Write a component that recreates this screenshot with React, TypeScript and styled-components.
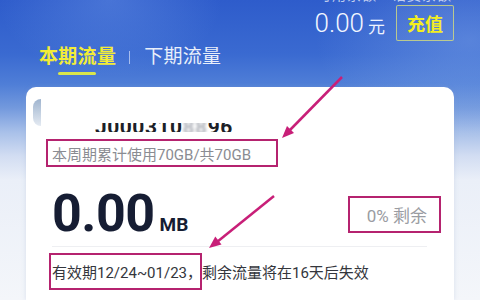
import React from "react";
import styled, { createGlobalStyle } from "styled-components";

const Global = createGlobalStyle`
  html, body { margin: 0; padding: 0; }
  body { width: 480px; height: 300px; overflow: hidden; font-family: Roboto, "Noto Sans CJK SC", sans-serif; }
`;

const Page = styled.div`
  position: relative;
  width: 480px;
  height: 300px;
  overflow: hidden;
  background:
    radial-gradient(ellipse 160px 110px at 110px 0px, rgba(120,160,235,0.35), rgba(120,160,235,0) 70%),
    radial-gradient(ellipse 220px 140px at 470px 40px, rgba(150,185,240,0.35), rgba(150,185,240,0) 70%),
    linear-gradient(180deg, #2e5ccb 0%, #3a6ad1 18%, #4f7ed7 28%, #7399dd 36%, #a8c0e9 44%, #d2ddf2 52%, #eaeff8 60%, #f4f6fa 100%);
  display: flex;
  flex-direction: column;
`;

const Header = styled.div`
  display: flex;
  flex-direction: column;
  align-items: flex-end;
  padding-right: 26px;
`;

const ClipLine = styled.div`
  height: 4px;
  overflow: hidden;
  display: flex;
  align-items: flex-end;
  padding-right: 2px;
`;

const ClipText = styled.span`
  font-size: 14px;
  line-height: 18px;
  color: rgba(255,255,255,0.7);
  white-space: nowrap;
  letter-spacing: 1px;
`;

const BalanceRow = styled.div`
  display: flex;
  align-items: center;
  margin-top: 1px;
`;

const Amount = styled.span`
  font-size: 26px;
  font-weight: 300;
  color: #f2f6ff;
  line-height: 30px;
`;

const Unit = styled.span`
  font-size: 17px;
  color: #eef3ff;
  margin-left: 4px;
  margin-top: 4px;
`;

const RechargeButton = styled.div`
  margin-left: 11px;
  width: 58px;
  height: 36px;
  box-sizing: border-box;
  border: 1.5px solid rgba(205, 215, 130, 0.85);
  border-radius: 2px;
  display: flex;
  align-items: center;
  justify-content: center;
  color: #f3ee1e;
  font-size: 18px;
  font-weight: 700;
  background: rgba(255,255,255,0.04);
`;

const Tabs = styled.div`
  display: flex;
  align-items: center;
  padding-left: 39px;
  margin-top: 4px;
  height: 24px;
`;

const Tab = styled.div<{ $active?: boolean }>`
  position: relative;
  font-size: 19px;
  line-height: 24px;
  font-weight: ${(p) => (p.$active ? 700 : 400)};
  color: ${(p) => (p.$active ? "#f3ec37" : "#e9effa")};
  letter-spacing: 0.3px;
`;

const Underline = styled.div`
  position: absolute;
  left: 19px;
  top: 27px;
  width: 38px;
  height: 3px;
  border-radius: 2px;
  background: #d9e64c;
`;

const TabDivider = styled.div`
  width: 1px;
  height: 13px;
  background: rgba(235,240,255,0.6);
  margin: 0 14px 0 13px;
`;

const Card = styled.div`
  margin: 18px 26px 0 26px;
  background: #ffffff;
  border-radius: 10px 10px 0 0;
  flex: 1;
  box-shadow: 0 0 4px rgba(140,160,200,0.25);
  display: flex;
  flex-direction: column;
`;

const CardTop = styled.div`
  display: flex;
  align-items: flex-start;
  height: 52px;
  padding-left: 7px;
`;

const Avatar = styled.div`
  margin-top: 12px;
  width: 8px;
  height: 27px;
  border-radius: 14px 0 0 14px;
  background: linear-gradient(180deg, #9fb4cf 0%, #c9d5e4 60%, #e4eaf2 100%);
`;

const NameClip = styled.div`
  margin-left: 54px;
  margin-top: 36px;
  height: 9px;
  overflow: hidden;
  display: flex;
  align-items: flex-end;
`;

const Name = styled.span`
  font-size: 21px;
  line-height: 20px;
  font-weight: 700;
  color: #1d1f28;
  letter-spacing: 0.5px;
  white-space: nowrap;
  position: relative;
  top: 5px;
`;

const Blur = styled.span`
  color: #b3b6bd;
  filter: blur(1.4px);
`;

const MarkBox = styled.div`
  display: inline-flex;
  align-items: center;
  box-sizing: border-box;
  border: 2px solid #b5236f;
`;

const UsageBox = styled(MarkBox)`
  margin-left: 20px;
  align-self: flex-start;
  height: 28px;
  width: 232px;
  padding-left: 4px;
`;

const UsageText = styled.span`
  font-size: 15px;
  color: #8a8c92;
  white-space: nowrap;
`;

const MainRow = styled.div`
  display: flex;
  align-items: center;
  justify-content: space-between;
  margin-top: 21px;
  padding: 0 13px 0 26px;
`;

const Big = styled.div`
  display: flex;
  align-items: baseline;
`;

const BigNum = styled.span`
  font-size: 52px;
  line-height: 52px;
  font-weight: 700;
  color: #161d33;
  letter-spacing: -0.5px;
`;

const BigUnit = styled.span`
  font-size: 19px;
  font-weight: 700;
  color: #161d33;
  margin-left: 5px;
`;

const RemainBox = styled(MarkBox)`
  width: 93px;
  height: 37px;
  justify-content: flex-end;
  padding-right: 12px;
`;

const RemainText = styled.span`
  font-size: 17px;
  color: #9a9ca2;
  white-space: nowrap;
`;

const Divider = styled.div`
  height: 1px;
  background: #eeeff2;
  margin: 6px 27px 0 26px;
`;

const BottomRow = styled.div`
  display: flex;
  align-items: center;
  margin-top: 6px;
  padding-left: 23px;
`;

const ValidBox = styled(MarkBox)`
  height: 37px;
  width: 153px;
  padding-left: 1px;
`;

const BodyText = styled.span`
  font-size: 15px;
  color: #34363c;
  white-space: nowrap;
`;

const Overlay = styled.svg`
  position: absolute;
  left: 0;
  top: 0;
  width: 480px;
  height: 300px;
  pointer-events: none;
`;

export default function App() {
  return (
    <>
      <Global />
      <Page>
        <Header>
          <ClipLine>
            <ClipText>可用余额　话费余额</ClipText>
          </ClipLine>
          <BalanceRow>
            <Amount>0.00</Amount>
            <Unit>元</Unit>
            <RechargeButton>充值</RechargeButton>
          </BalanceRow>
        </Header>
        <Tabs>
          <Tab $active>
            本期流量
            <Underline />
          </Tab>
          <TabDivider />
          <Tab>下期流量</Tab>
        </Tabs>
        <Card>
          <CardTop>
            <Avatar />
            <NameClip>
              <Name>
                J000310<Blur>88</Blur>96
              </Name>
            </NameClip>
          </CardTop>
          <UsageBox>
            <UsageText>本周期累计使用70GB/共70GB</UsageText>
          </UsageBox>
          <MainRow>
            <Big>
              <BigNum>0.00</BigNum>
              <BigUnit>MB</BigUnit>
            </Big>
            <RemainBox>
              <RemainText>0% 剩余</RemainText>
            </RemainBox>
          </MainRow>
          <Divider />
          <BottomRow>
            <ValidBox>
              <BodyText>有效期12/24~01/23，</BodyText>
            </ValidBox>
            <BodyText>剩余流量将在16天后失效</BodyText>
          </BottomRow>
        </Card>
        <Overlay viewBox="0 0 480 300">
          <line x1="342" y1="77" x2="289" y2="131" stroke="#c81f78" strokeWidth="2.5" />
          <polygon points="282,138 294,133 287,126" fill="#c81f78" />
          <line x1="274" y1="196" x2="217" y2="242" stroke="#c81f78" strokeWidth="2.5" />
          <polygon points="209,248 221.5,244.4 215.3,236.6" fill="#c81f78" />
        </Overlay>
      </Page>
    </>
  );
}
